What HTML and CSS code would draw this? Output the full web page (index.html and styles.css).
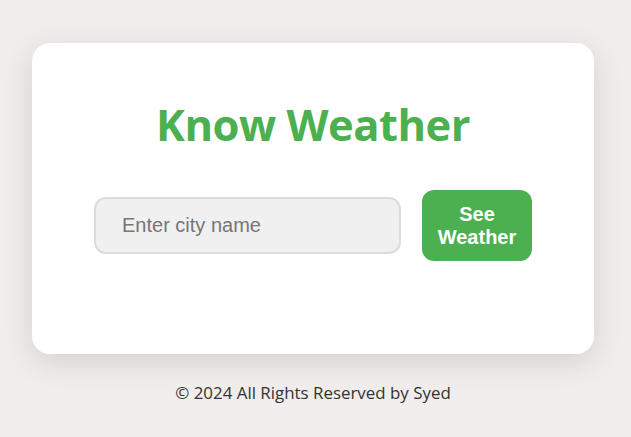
FILE: index.html
```html
<!DOCTYPE html>
<html lang="en">
<head>
<meta charset="utf-8">
<title>Know Weather</title>
<link rel="stylesheet" href="styles.css">
</head>
<body>
<main class="page">
  <section class="card">
    <h1 class="title">Know Weather</h1>
    <div class="search-row">
      <input class="city-input" type="text" placeholder="Enter city name">
      <button class="see-btn" type="button">See<br>Weather</button>
    </div>
  </section>
  <footer class="footer">© 2024 All Rights Reserved by Syed</footer>
</main>
</body>
</html>
```
FILE: styles.css
```css
html, body {
  margin: 0;
  padding: 0;
}
body {
  background: #f1eded;
  font-family: "Open Sans", "Noto Sans", sans-serif;
  width: 631px;
  height: 437px;
  overflow: hidden;
}
.page {
  width: 626px;
  display: flex;
  flex-direction: column;
  align-items: center;
  padding-top: 43px;
}
.card {
  box-sizing: border-box;
  width: 562px;
  height: 311px;
  background: #ffffff;
  border-radius: 18px;
  box-shadow: 0 8px 30px rgba(0, 0, 0, 0.12);
  display: flex;
  flex-direction: column;
  align-items: center;
  padding-top: 53px;
}
.title {
  margin: 0;
  color: #4caf50;
  font-family: "Open Sans", "Noto Sans", sans-serif;
  font-weight: 700;
  font-size: 43.5px;
  line-height: 58px;
  letter-spacing: -0.5px;
}
.search-row {
  display: flex;
  align-items: center;
  gap: 21px;
  margin-top: 36px;
}
.city-input {
  box-sizing: border-box;
  width: 307px;
  height: 57px;
  border: 2px solid #dcdcdc;
  border-radius: 12px;
  background: #f0f0f0;
  padding: 0 26px;
  font-family: "Liberation Sans", Arial, sans-serif;
  font-size: 20px;
  color: #333;
  outline: none;
}
.city-input::placeholder {
  color: #767676;
}
.see-btn {
  box-sizing: border-box;
  width: 110px;
  height: 71px;
  border: none;
  border-radius: 12px;
  background: #4caf50;
  color: #ffffff;
  font-family: "Liberation Sans", Arial, sans-serif;
  font-weight: 700;
  font-size: 20px;
  line-height: 23px;
  padding: 0;
}
.footer {
  margin-top: 27px;
  font-family: "Open Sans", "Noto Sans", sans-serif;
  font-size: 16.9px;
  color: #333333;
}
```
